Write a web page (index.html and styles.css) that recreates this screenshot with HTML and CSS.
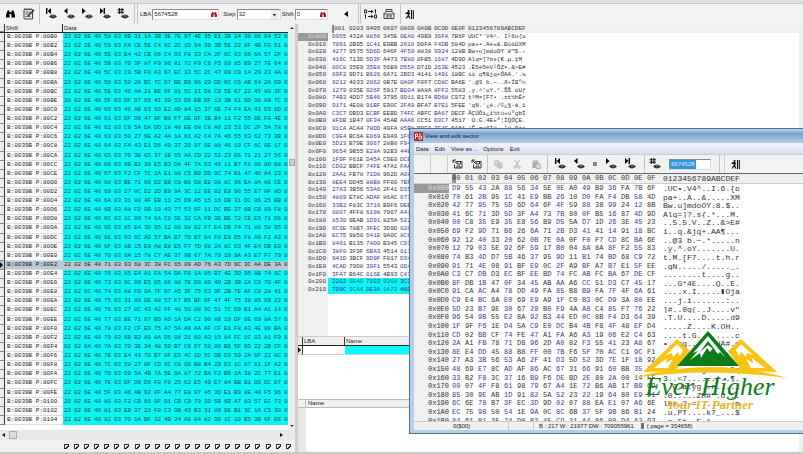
FILE: index.html
```html
<!DOCTYPE html>
<html lang="en">
<head>
<meta charset="utf-8">
<title>View and edit sector</title>
<link rel="stylesheet" href="styles.css">
</head>
<body>
<svg class="defs" aria-hidden="true">
  <symbol id="eye" viewBox="0 0 8 5"><path d="M0 2.5Q4-1.6 8 2.5Q4 6.4 0 2.5Z" fill="#333"/><circle cx="4" cy="2" r="1" fill="#777"/></symbol>
  <symbol id="first" viewBox="0 0 12 12"><path d="M1 0h1.4v6H1zM6 0v6L2.6 3z"/><use href="#eye" x="4" y="6" width="8" height="5"/></symbol>
  <symbol id="prev" viewBox="0 0 12 12"><path d="M4.5 0v6L1 3z"/><use href="#eye" x="4" y="6" width="8" height="5"/></symbol>
  <symbol id="next" viewBox="0 0 12 12"><path d="M1 0v6l3.6-3z"/><use href="#eye" x="4" y="6" width="8" height="5"/></symbol>
  <symbol id="last" viewBox="0 0 12 12"><path d="M1 0v6l3.4-3zM4.6 0H6v6H4.6z"/><use href="#eye" x="4" y="6" width="8" height="5"/></symbol>
  <symbol id="goto" viewBox="0 0 12 12"><path d="M2.4 0v6M5 0v6M.5 1.8h6.4M.5 4.2h6.4" stroke="#111" stroke-width="1.1"/><use href="#eye" x="4" y="6" width="8" height="5"/></symbol>
  <symbol id="find" viewBox="0 0 10 8"><path d="M1.8 0h2v2h2.4V0h2L10 5v3H6V4H4v4H0V5z"/></symbol>
  <symbol id="note" viewBox="0 0 12 12"><path d="M1 1.5h8.500V11H1z" fill="#e4e4e4" stroke="#444"/><path d="M2.500 4h5M2.500 6h3M2.500 8.500h5M2 0v2M4 0v2M6 0v2M8 0v2" stroke="#444" stroke-width=".8"/><path d="M5 8l6-6" stroke="#222" stroke-width="1.5"/></symbol>
  <symbol id="exit" viewBox="0 0 9 9"><circle cx="3.6" cy="1" r="1"/><path d="M.5 3.500L3.500 2.300l1.300 2M3.500 2.500L3.200 5.500 1 8.500M3.300 5l1.600 3.500" fill="none" stroke="#111" stroke-width="1.2"/><path d="M6 0h1.200v9H6zM8 0h.8v9H8z"/></symbol>
  <symbol id="invert" viewBox="0 0 13 10"><path d="M.6 1h2v3h-2zM10.500 6h2v3h-2zM11.500 .5v4M10.700 1.300l.8-.6M1.500 5.500v4M.8 6.300l.8-.6M4 2.500h4M4 7.500h4" fill="none" stroke="#222"/><path d="M7 .8l2.500 1.700L7 4.200zM7 5.800l2.500 1.700L7 9.200z"/></symbol>
  <symbol id="cards" viewBox="0 0 12 11"><path d="M3 3V1h6v2M1 5l2-2h6l2 2v5H1zM1 5.500h10M4 6v4M8 6v4M4 7.500h4" fill="none" stroke="#333" stroke-width=".9"/></symbol>
  <symbol id="disk" viewBox="0 0 11 10"><path d="M1 1l3.500 3.500M1 4V1h3M4 2.500h6V9H2.500V5.500M5 2.500V5h3.500V2.500M5 9V7h3v2" fill="none" stroke="#222" stroke-width=".9"/></symbol>
  <symbol id="copy" viewBox="0 0 9 9"><path d="M.8.8h4v5h-4zM3.800 3h4v5h-4zM5 5h2M5 6.500h2" fill="#ddd" stroke="#b4b4b4" stroke-width=".9"/></symbol>
  <symbol id="cut" viewBox="0 0 9 9"><path d="M2 0l3.500 6M6.500 0L3 6" stroke="#b4b4b4"/><circle cx="2.300" cy="7" r="1.200" fill="none" stroke="#b4b4b4"/><circle cx="6" cy="7" r="1.200" fill="none" stroke="#b4b4b4"/></symbol>
  <symbol id="paste" viewBox="0 0 9 9"><path d="M.5 1.500h6V8h-6z" fill="#aaa"/><path d="M2 .5h3v2H2zM4 4h4.500v4.500H4z" fill="#ddd" stroke="#aaa" stroke-width=".8"/></symbol>
  <symbol id="stop" viewBox="0 0 6 6"><path d="M1 1h4v4H1z" fill="#888"/></symbol>
</svg>

<div class="app">
  <div class="frame-top"></div>
  <header class="toolbar">
    <div class="group tools">
      <button aria-label="Find"><svg class="i-find"><use href="#find"/></svg></button>
      <button aria-label="Edit"><svg class="i-12"><use href="#note"/></svg></button>
    </div>
    <div class="group nav">
      <button aria-label="First"><svg class="i-12"><use href="#first"/></svg></button>
      <button aria-label="Previous"><svg class="i-12"><use href="#prev"/></svg></button>
      <button aria-label="Next"><svg class="i-12"><use href="#next"/></svg></button>
      <button aria-label="Last"><svg class="i-12"><use href="#last"/></svg></button>
      <button aria-label="Go to"><svg class="i-12"><use href="#goto"/></svg></button>
    </div>
    <div class="group fields">
      <label for="lba">LBA</label>
      <span class="field wide"><input id="lba" value="5674528"><button aria-label="Pick LBA"><svg class="i-red"><use href="#find"/></svg></button></span>
      <label for="step">Step</label>
      <span class="field mid"><select id="step"><option>32</option></select></span>
      <label for="shift">Shift</label>
      <span class="field small"><input id="shift" value="0"><button aria-label="Pick shift"><svg class="i-red"><use href="#find"/></svg></button></span>
      <button class="back" aria-label="Back"><svg class="i-back" viewBox="0 0 4 6"><path d="M4 0v6L0 3z"/></svg></button>
    </div>
    <div class="group extra">
      <button aria-label="Invert"><svg class="i-13"><use href="#invert"/></svg></button>
      <button aria-label="Layout"><svg class="i-12"><use href="#cards"/></svg></button>
    </div>
    <div class="group last"><button aria-label="Exit"><svg class="i-9"><use href="#exit"/></svg></button></div>
  </header>

  <main class="panes">
    <section class="left">
      <div class="left-view">
        <table class="dump">
          <thead><tr><th class="mark"></th><th class="shift">Shift</th><th class="data">Data</th></tr></thead>
          <tbody id="dump"></tbody>
        </table>
        <div class="vbar"><i class="up"></i><i class="thumb"></i><i class="down"></i></div>
      </div>
      <div class="hbar"><i class="west"></i><i class="thumb"></i><i class="east"></i></div>
      <div class="checks" id="checks"></div>
    </section>

    <section class="right">
      <table class="hex words">
        <thead id="words-head"></thead>
        <tbody id="words"></tbody>
      </table>
      <table class="marks">
        <thead><tr><th class="pick"></th><th class="lba">LBA</th><th>Name</th></tr></thead>
        <tbody><tr><td class="pick"><i class="east"></i></td><td class="lba"></td><td class="fill"></td></tr></tbody>
      </table>
      <div class="names"><div class="names-head"><span></span><b>Name</b></div><div class="names-body"><span></span></div></div>
    </section>
  </main>
  <div class="frame-bottom"></div>

  <section class="window">
    <div class="title"><svg class="i-9" viewBox="0 0 9 9"><path d="M0 0h9v9H0z" fill="#b52a20"/><path d="M1.500 7V2h2v2.500h-2M5 7V4h2.500M5 2h2M7.500 4v3H5" fill="none" stroke="#fff" stroke-width=".9"/></svg>View and edit sector</div>
    <nav class="menu"><button>Data</button><button>Edit</button><button>View as ..</button><button>Options</button><button>Exit</button></nav>
    <div class="wbar">
      <div class="cell"></div><div class="cell"></div>
      <div class="group two">
        <button aria-label="Load"><svg class="i-11"><use href="#disk"/></svg></button>
        <button aria-label="Save"><svg class="i-11"><use href="#disk"/></svg></button>
      </div>
      <div class="group three">
        <button aria-label="Copy"><svg class="i-9"><use href="#copy"/></svg></button>
        <button aria-label="Cut"><svg class="i-9"><use href="#cut"/></svg></button>
        <button aria-label="Paste"><svg class="i-9"><use href="#paste"/></svg></button>
      </div>
      <div class="group six">
        <button aria-label="First"><svg class="i-12"><use href="#first"/></svg></button>
        <button aria-label="Previous"><svg class="i-12"><use href="#prev"/></svg></button>
        <button aria-label="Stop"><svg class="i-6"><use href="#stop"/></svg></button>
        <button aria-label="Next"><svg class="i-12"><use href="#next"/></svg></button>
        <button aria-label="Last"><svg class="i-12"><use href="#last"/></svg></button>
      </div>
      <div class="group jump">
        <button aria-label="Go to"><svg class="i-12"><use href="#goto"/></svg></button>
        <span class="field jumpbox"><input class="picked" aria-label="Sector" value="5674528"></span>
      </div>
      <div class="group out"><button aria-label="Exit"><svg class="i-9"><use href="#exit"/></svg></button></div>
    </div>
    <table class="hex bytes">
      <thead id="bytes-head"></thead>
      <tbody id="bytes"></tbody>
    </table>
    <footer class="status"><span class="pos">0($00)</span><span class="gap"></span><span class="vals">B : 217 W : 21977 DW : 709055961</span><i></i><span>( page = 354658)</span></footer>
  </section>

  <div class="logo">
    <svg viewBox="0 0 156 50">
      <g fill="#f9c414"><path d="M11 41L45 8l13 12-15 20z"/><path d="M145 41L109 8 96 20l14 20z"/></g>
      <g fill="#fff"><path d="M45 13L34 24l6-2 1 4 5-5 2 4 3-6zM22 37l13-10-1 5 7-4-5 9z"/><path d="M109 13l12 11-6-2-1 4-5-5-2 4-3-6zM133 37l-13-10 1 5-7-4 5 9z"/></g>
      <path d="M45 35L76 0l31 35z" fill="#0d7b18"/>
      <path d="M76 5L61 22l5-2-8 9 10-7 1 5 6-10 3 4 3-4 5 6 2-2 6 6z" fill="#fff"/>
      <path d="M76 10l-8 11 8-7 8 6z" fill="#0d7b18"/>
      <path d="M0 47Q78 25 156 47Q78 36 0 47Z" fill="#f9c414"/>
    </svg>
    <div class="brand">Ever Higher</div>
    <div class="tag">Your IT Partner</div>
  </div>
</div>
<script src="data.js"></script>
</body>
</html>
```
FILE: styles.css
```css
* { box-sizing: border-box; }
body { margin: 0; font: 6px/8px "Liberation Sans", sans-serif; color: #222; }
button, input, select { font: inherit; color: inherit; margin: 0; padding: 0; border: 0; background: none; border-radius: 0; }
button { display: flex; align-items: center; justify-content: center; }
table { border-spacing: 0; }
th { font-weight: normal; text-align: left; padding: 0; }
td { padding: 0; }
svg { display: block; }
.defs { position: absolute; width: 0; height: 0; }
.i-find { width: 9px; height: 8px; }
.i-red { width: 6px; height: 5px; fill: #a3182c; }
.i-back { width: 4px; height: 6px; }
.i-6 { width: 6px; height: 6px; }
.i-9 { width: 9px; height: 9px; }
.i-11 { width: 11px; height: 10px; }
.i-12 { width: 12px; height: 12px; }
.i-13 { width: 13px; height: 10px; }

.app { position: relative; height: 100vh; display: flex; flex-direction: column; overflow: hidden; background: #f0f0f0; }
.frame-top { height: 4px; flex: none; background: #dfe1e6; border-bottom: 1px solid #c4c4c8; }
.frame-bottom { height: 2px; flex: none; background: #c8c8c8; }

.toolbar { height: 20px; flex: none; display: flex; align-items: stretch; background: #f2f2f2; }
.group { display: flex; align-items: center; border-right: 1px solid #c4c4c4; }
.tools { width: 40px; gap: 8px; padding-left: 6px; }
.nav { width: 95px; gap: 6px; padding-left: 5px; }
.fields { width: 222px; gap: 1px; padding-left: 2px; margin-left: 2px; border-left: 1px solid #c4c4c4; }
.field { display: flex; align-items: center; height: 11px; background: #fff; border: 1px solid #888; border-right-color: #ddd; border-bottom-color: #ddd; padding-right: 1px; }
.field input, .field select { flex: 1; min-width: 0; width: 100%; height: 9px; line-height: 9px; padding-left: 1px; }
.field select { appearance: none; background: linear-gradient(#333, #333) right 3px center / 3px 1px no-repeat, linear-gradient(#333, #333) right 4px top 5px / 1px 1px no-repeat, linear-gradient(90deg, #fff 33px, #eee 33px); }
.wide { width: 67px; margin-right: 3px; }
.mid { width: 44px; }
.small { width: 33px; }
.back { margin-left: 15px; }
.extra { width: 41px; gap: 6px; padding-left: 3px; margin-left: 1px; border-left: 1px solid #c4c4c4; }
.last { padding-left: 4px; border: 0; }

.panes { flex: 1; min-height: 0; display: grid; grid-template-columns: 297px minmax(0, 1fr); }
.left { min-height: 0; display: flex; flex-direction: column; border-right: 2px solid #d0d0d0; }
.left-view { flex: 1; min-height: 0; display: flex; background: #fff; }
.dump { flex: 1; min-width: 0; display: flex; flex-direction: column; padding-bottom: 5px; }
.dump thead { display: block; height: 9px; }
.dump tr { display: grid; grid-template-columns: 5px 58px minmax(0, 1fr); }
.dump thead tr { height: 9px; background: #f0f0f0; border-bottom: 1px solid #222; }
.dump thead th { border-right: 1px solid #222; padding-left: 1px; }
.dump thead .data { border-right: 0; }
.dump tbody { flex: 1; min-height: 0; display: grid; grid-auto-rows: minmax(0, 1fr); font: 6px/8px "Liberation Mono", monospace; }
.dump tbody tr { min-height: 0; overflow: hidden; align-items: stretch; }
.dump .mark { background: #eee; border-right: 1px solid #333; border-bottom: 1px solid #888; }
.dump .mark i { margin-top: 1px; }
.dump .addr { padding-left: 2px; border-bottom: 1px solid #ddd; white-space: nowrap; }
.dump .run { display: grid; grid-template-columns: repeat(22, minmax(0, 1fr)) 4px; padding-left: 1px; background: #0ff3f3; color: #055; }
.dump .current td { background: #b9cad6; color: #222; }
.vbar { width: 7px; flex: none; display: flex; flex-direction: column; align-items: center; background: #ededed; padding: 3px 0; }
.vbar .thumb { width: 6px; height: 7px; background: #ccc; border: 1px solid #aaa; }
.vbar .up + .thumb { margin-top: 130px; }
.vbar .down { margin-top: auto; }
.up, .down { border: 2px solid transparent; width: 0; height: 0; }
.up { border-bottom-color: #333; border-top: 0; }
.down { border-top-color: #333; border-bottom: 0; }
.west, .east { display: block; width: 0; height: 0; border: 3px solid transparent; }
.east { border-left-color: #111; border-right: 0; }
.west { border-right-color: #111; border-left: 0; }
.hbar { height: 10px; flex: none; display: flex; align-items: center; gap: 4px; background: #e9e9e9; padding: 0 12px 0 2px; }
.hbar .thumb { width: 8px; height: 8px; background: #ddd; border: 1px solid #aaa; }
.hbar .east { margin-left: auto; }
.hbar .east, .hbar .west { border-top-width: 2px; border-bottom-width: 2px; }
.checks { height: 12px; flex: none; display: flex; justify-content: space-between; align-items: center; padding: 0 4px 0 64px; }
.checks input { appearance: none; margin: 0; width: 5px; height: 5px; border-top: 1px solid #333; border-left: 1px solid #333; background: linear-gradient(135deg, #fff 40%, #222 40%, #222 70%, #fff 70%); }

.right { min-height: 0; display: flex; flex-direction: column; background: #fff; margin-right: 4px; border-left: 1px solid #ccc; }
.hex { display: flex; flex-direction: column; font-family: "Liberation Mono", monospace; color: #333; }
.hex tr { display: grid; min-height: 0; overflow: hidden; }
.hex td, .hex th { white-space: pre; }
.hex .off { text-align: right; background: #f0f0f0; }
.hex tbody tr:first-child .off { background: #999; color: #ddd; }
.hex td.blue { color: #3a3a90; }
.words { flex: 1; min-height: 0; font-size: 6px; line-height: 8px; background: linear-gradient(90deg, #f0f0f0 30px, #fff 30px); }
.words tr { grid-template-columns: 30px 4px repeat(8, 17px) 61px; }
.words thead tr { height: 9px; align-items: center; background: #f0f0f0; }
.words tbody { flex: 1; min-height: 0; display: grid; grid-template-rows: repeat(34, minmax(0, 2fr)) minmax(0, 11fr); }
.words .off { padding-right: 2px; }
.words .hot { background: #0ff3f3; color: #167a8c; }
.words .caret { border-left: 2px solid #888; }

.marks { display: block; height: 63px; flex: none; border-top: 1px solid #ccc; }
.marks thead, .marks tbody { display: block; }
.marks tr { display: grid; grid-template-columns: 5px 42px 1fr; height: 9px; }
.marks thead tr { background: #f0f0f0; border-bottom: 1px solid #222; }
.marks th { border-right: 1px solid #333; padding-left: 1px; }
.marks .pick { border-right: 1px solid #333; display: flex; align-items: center; background: #eee; }
.marks td { border-bottom: 1px solid #ccc; }
.marks .fill { background: #0ff; }
.names { height: 53px; flex: none; display: flex; flex-direction: column; border-top: 1px solid #bbb; }
.names-head { display: flex; height: 8px; background: #f0f0f0; border-bottom: 1px solid #bbb; }
.names-head b { font-weight: normal; line-height: 7px; }
.names-head span { width: 8px; border-right: 1px solid #bbb; margin-right: 2px; }
.names-body { flex: 1; display: flex; }
.names-body span { width: 8px; background: #e8e8e8; }

.window { position: absolute; left: 409px; right: 0; top: 128px; bottom: 20px; display: flex; flex-direction: column; border: 1px solid #50738f; border-right: 0; padding: 0 0 3px 4px; background: #b4cfe8; }
.title { height: 14px; flex: none; display: flex; align-items: center; gap: 2px; margin-left: -4px; padding-left: 4px; background: linear-gradient(#c5d8ec, #7ba3cf 30%, #b3cce8); color: #123; }
.menu { height: 11px; flex: none; display: flex; gap: 6px; padding-left: 2px; background: linear-gradient(#f4f5fc, #d9deee); }
.wbar { height: 19px; flex: none; display: flex; align-items: stretch; background: #f2f2f2; border-top: 1px solid #ccc; }
.cell { width: 17px; border-right: 1px solid #ccc; }
.two { width: 40px; gap: 8px; padding-left: 4px; }
.three { width: 60px; gap: 10px; padding-left: 6px; }
.six { width: 97px; gap: 7px; padding-left: 6px; }
.jump { width: 75px; gap: 8px; padding-left: 4px; }
.jumpbox { width: 42px; }
.field .picked { flex: none; width: 26px; background: #3295dd; color: #e2f2ff; }
.out { margin-left: 4px; border-left: 1px solid #ccc; border-right: 0; padding-left: 6px; }
.bytes { flex: 1; min-height: 0; font-size: 7px; line-height: 9px; background: #fff; }
.bytes tr { grid-template-columns: 35px 3px repeat(16, 13px) 3px 80px; align-items: stretch; }
.bytes thead tr { height: 11px; background: #f0f0f0; align-items: center; border-top: 1px solid #666; border-bottom: 1px solid #ccc; }
.bytes tbody { flex: 1; min-height: 0; display: grid; grid-template-rows: repeat(27, minmax(0, 2fr)) minmax(0, 1fr); }
.bytes .ascii { font-size: 8px; }
.bytes .caret { background: linear-gradient(90deg, #999 4px, transparent 4px); }
.status { height: 9px; flex: none; display: flex; align-items: center; gap: 3px; background: #f0f0f0; border-top: 1px solid #ccc; }
.status .pos { width: 95px; padding-left: 39px; border-right: 1px solid #ccc; }
.status .gap { width: 22px; border-right: 1px solid #ccc; height: 7px; margin-right: 2px; }
.status i { width: 3px; height: 6px; background: #777; margin-left: 4px; }

.logo { position: absolute; left: 632px; top: 331px; width: 156px; display: flex; flex-direction: column; align-items: center; font-family: "Liberation Serif", serif; font-style: italic; white-space: nowrap; }
.logo svg { width: 156px; height: 50px; }
.brand { font-size: 26px; line-height: 24px; margin-top: -6px; color: #0d7b18; }
.tag { font-size: 13px; line-height: 12px; color: #f0b820; font-weight: bold; }
```
FILE: data.js
```js
// Raw track dump: four header bytes, a sequence byte, then payload.
const dump = `58 03 6B 31 1A 3B 3E 7E 97 4E 35 E1 3B 24 30 06 04 52
59 03 FA CE 5E C4 6C 2C 1D 94 39 3B 5E 22 8F 4B FD 51
5E 03 E4 42 CB 06 C4 93 F8 33 CA 2F 6C 03 06 6A 57 2F
5B 03 7D 3F 87 F9 96 81 72 F9 C6 F5 09 85 B9 27 7E 64
5C 03 C9 5B F0 A3 97 EC 33 5C 2C 47 09 C0 14 29 23 4A
5D 03 50 26 BC 7C D7 BE B9 96 20 DD 6C C6 AB 64 2A 09
5E 03 46 AA 21 BE 6F 01 5C 21 D8 C9 5E 67 22 45 80 3F
5F 03 DF D7 65 41 39 53 D6 EB DF 13 3B 61 9D 08 A9 7C
60 03 46 AB 03 60 E2 AD 84 15 37 6E 74 F4 EA 43 D3 0D
61 03 DF D6 47 9F B0 F7 0E DF 3B B4 11 F2 55 0E F0 4E
62 03 C9 5A DA DD 18 48 EB 68 C8 A0 23 53 DC 2F 5A 78
63 03 50 27 9E A2 4A 1A 61 A2 C4 7A 46 55 63 62 73 3B
64 03 F4 43 E1 D6 49 37 20 07 0E 88 46 10 CF 6C 0E 17
65 03 7D 3E 65 37 1B 65 AA CD 22 52 23 06 71 21 27 56
66 03 6B B2 38 E5 B3 DA 4F 7A D3 46 11 B7 F8 00 8D 68
67 03 F2 CF 7C 1A E1 88 C5 B0 DD 9C 74 B1 47 4D A4 23
68 03 BE 71 96 D2 EB C8 B6 D8 EE D8 8C 96 EA 8A A6 CE
69 03 27 0C D2 2D B9 9A 3C 12 EE 02 E9 90 55 E7 8F 8D
6A 03 31 80 4F EB 11 25 D9 A5 15 16 DB 31 DC 86 25 BB
6B 03 A8 FD 0B 10 43 77 53 6F 11 DC BE 37 6B CB 09 F8
6C 03 1C 99 74 6A C0 5E 32 CA FB 3E BE 72 CE E5 71 D6
6D 03 85 E4 3D 95 12 08 98 02 F7 E4 DB 74 71 88 58 95
6E 03 93 6C AD 57 BA B7 7D B7 04 F0 E9 D5 F8 A9 F2 A3
6F 03 8B 15 E9 A8 E8 E5 F7 7D 08 2A 8C D3 4F E4 DB E0
70 03 0A 15 78 C7 AE 37 9B 67 7A 79 19 9A A3 E7 F7 79
71 03 93 68 3C 38 FC 65 09 AD 76 A3 7D 9C 3C AA DE 3A
76 03 85 E4 A1 FA 54 DA F6 1A 85 B7 4E 3D 95 8B 74 0C
73 03 9C 99 E5 05 06 88 7E D0 89 4D 2B 3B 2A C6 7D 4F
74 03 A8 FD 9A 7F 07 A5 3F 75 63 9F 2B 7E AF C8 28 41
75 03 31 80 DE 88 57 F7 B5 BF 6F 47 4F 75 38 85 09 22
76 03 27 0C 43 42 FF 48 50 08 9C 51 7C D9 B1 A4 A1 14
77 03 BE 71 07 BD AD 1A DA C2 90 8B 19 DF 0E 69 8A 57
78 03 F2 CF ED 75 A7 5A A9 AA AF CF E1 F8 A3 4E 88 BA
79 03 6B B2 A9 8A D5 08 21 60 A3 15 84 FC 1C 03 A1 F9
7A 03 7D 3E 34 48 5D B7 C6 D7 50 00 B6 5F 95 22 2B CF
7B 03 E4 43 70 B7 0F E5 4C 1D 5C DB D3 59 2A 6F 22 8C
7C 03 50 27 0F CD 0C C8 0D B8 B4 29 D3 1C 87 61 1F A2
7D 03 D9 5A 4B 7A 5E 9A 87 72 BA F2 B6 1A 38 2C 77 E1
7E 03 DF D6 D6 F0 F6 25 62 E5 49 E7 84 BB B1 0D DC D7
5F 03 46 AB 92 0F A4 77 E8 07 45 3D E1 B9 0E 40 F5 96
80 03 F2 CB 66 0F 91 CB C9 79 3D 5B 6B A7 83 57 EC 73
81 03 EB 37 22 F0 C3 9B 43 B3 31 89 6E B1 3C 1A C5 30
82 03 7D 1A BF 32 4B 24 A6 04 82 9D 1C 10 B5 3B 6F 06`.split("\n");
// Rows whose header bytes differ from the usual 22 02 6E 40.
const heads = { 1: "22 02 2E 40", 7: "20 02 6E 40", 28: "22 02 6C 40", 34: "02 02 6A 40", 40: "20 02 6E 40" };

// Each row: sector bytes | plain text view | code page text view.
const sector = `D955432A8856345E0EA049B936FA7B6F|.UC•.V4^..I.6.{o|ÙUC*ˆV4^. I¹6ú{o
70612B951C41E9BB2610D0FAF4DB584D|pa+..A..&.....XM|pa+•.Aé»&.ÐúôÛXM
427795755D6D646F4F5988389924128B|Bw.u]mdoOY.8.$..|Bw•u]mdoOYˆ8™$.‹
416C713D5D3FA4737B800FB516874D9D|Alq=]?.s{.*...M.|Alq=]?¤s{€.µ.‡M
00C835E935E856B9D55AD71D263E4523|..5.5.V..Z..&>E#|.È5é5èV¹ÕZ×.&>E#
69F29D71B6266A712BD34141149118BC|i..q.&jq+.AA¶...|iò q¶&jq+ÓAA.‘.¼
9212403320620B7E0A0FF0F7CD8CBA6E|..@3 b.~.*.....n|’.@3 b.~..ð÷ÍŒºn
1279035E926F5917B0048A8A8FF25583|.y.^.oY.......U.|.y.^’oY.°.ŠŠ òUƒ
74B34DD75B4637959D11B174BD68C972|t.M.[F7....t.h.r|t³M×[F7• .±t½hÉr
91714E0891BFE90C2FA9BFA7B7E15FEE|.qN...../....._.|‘qN.‘¿é./©¿§·á_î
C3C7DBD3ECBFEEBD74FCABFCBA67DECF|........t....g..|ÃÇÛÓì¿î½tü«üºgÞÏ
8FDB1B470F3445ABAAA6CC51D3C74517|...G*4E....Q..E.| Û.G.4E«ª¦ÌQÓÇE.
91CAACA478DD49FA85B8B9FA7F4F6A61|....x.I.....▮Oja|‘Ê¬¤xÝIú…¸¹ú.Oja
C9E4BC6AE069E9A91FC0B30CD93A80EE|...j.i.......:..
5D23B79E306728B0F94AA8C485F77622|]#..0g(..J....v"
96549B55E28A92B344ED0C8BF4D36439|.T.U....D.....d9
1F9FF61ED45AC9E0DCB44BF84F48EFD4|.....Z....K.OH..
CD02BBCF74FE47A1FAA6A31906E2C463|....t.G........c
2AA1FB7871D8962DA082F3554123A867|•..xq..-...UA#.g
8EE4DD4588B8FF007BF65F70ACC19CF1|...E....{._p....
27A33B5653A62F41D35D523D7E1F1892|'.;VS./A.]R=~...
4869E78CADAF86AC6731669160BB3571|Hi......g1f.\`.5q
33B2F83C3716B9F6DEBD2E802A0014FF|3..<7......*..¶.
00074FF861987967A41E72B6AB17B969|..O.a.yg..r....i
85309EAB1D91825A522322196480E991|.0.....ZR#".d...
6C6E78B73FEC3D9D020788EAE107A66E|lnx.?.=........n
EC759850541E9A0C8C6B375F9B86B124|.u.PT....k7_...$
8461B13574D0B345C931A48608D4A292|.a.5t..E.1......
38F03F9F6BA345140170
941D3BCF9D9FF017D340
4CAD79D839F155430D40
3FA7B64C016E4B93C470
22026E40710393683C38
7D9C3CAADE3A1A7246B0`.split("\n").map(r => r.split("|"));

const byId = id => document.getElementById(id);
const esc = s => s.replace(/&/g, "&amp;").replace(/</g, "&lt;");
const hex = (n, w) => n.toString(16).toUpperCase().padStart(w, "0");

byId("dump").innerHTML = dump.map((line, i) => {
  const bytes = ((heads[i] || "22 02 6E 40") + " " + line).split(" ").concat("0");
  const current = i === 25;
  return `<tr${current ? ' class="current"' : ""}><td class="mark">${current ? '<i class="east"></i>' : ""}</td>` +
    `<td class="addr">B:0039B P:${hex(0xB0 + i * 2, 4)}</td>` +
    `<td class="run">${bytes.map(b => `<span>${b}</span>`).join("")}</td></tr>`;
}).join("");

byId("checks").innerHTML = Array.from({ length: 23 }, (_, i) =>
  `<input type="checkbox" checked aria-label="Column ${i}">`).join("");

const cells = (row, size) => (row.match(new RegExp(`.{1,${size}}`, "g")) || []);

byId("words-head").innerHTML = `<tr><th class="off"></th><th></th>` +
  ["001", "0203", "0405", "0607", "0809", "0A0B", "0C0D", "0E0F"].map((h, i) => `<th${i ? "" : ' class="caret"'}>${h}</th>`).join("") +
  `<th>0123456789ABCDEF</th></tr>`;
byId("words").innerHTML = sector.map((r, n) => {
  const hot = n > 31 ? " hot" : "";
  return `<tr><td class="off">0x${hex(n * 16, 3)}</td><td class="${hot}"></td>` +
    cells(r[0], 4).map((w, i) => `<td class="${i % 2 ? "" : "blue"}${hot}">${w}</td>`).join("") +
    (r[2] ? `<td>${esc(r[2])}</td>` : "") + `</tr>`;
}).join("");

byId("bytes-head").innerHTML = `<tr><th class="off"></th><th></th>` +
  Array.from({ length: 16 }, (_, i) => `<th${i ? "" : ' class="caret"'}>${hex(i, 2)}</th>`).join("") +
  `<th></th><th class="ascii">0123456789ABCDEF</th></tr>`;
byId("bytes").innerHTML = sector.slice(0, 28).map((r, n) =>
  `<tr><td class="off">0x${hex(n * 16, 3)}</td><td></td>` +
  cells(r[0], 2).map((b, i) => `<td class="${i % 2 ? "" : "blue"}">${b}</td>`).join("") +
  `<td></td><td class="ascii">${esc(r[1])}</td></tr>`).join("");
```
